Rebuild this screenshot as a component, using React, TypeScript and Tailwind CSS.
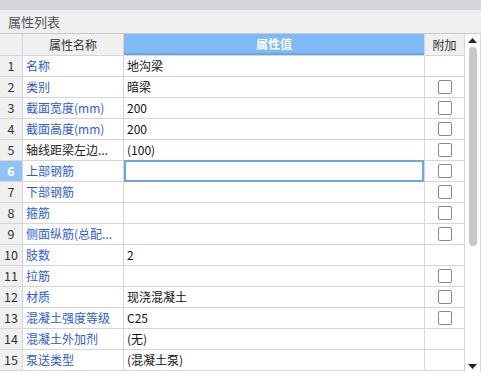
import React from 'react';

type Row = { name: string; value: string; blue: boolean; check: boolean };

const rows: Row[] = [
  { name: '名称', value: '地沟梁', blue: true, check: false },
  { name: '类别', value: '暗梁', blue: true, check: true },
  { name: '截面宽度(mm)', value: '200', blue: true, check: true },
  { name: '截面高度(mm)', value: '200', blue: true, check: true },
  { name: '轴线距梁左边...', value: '(100)', blue: false, check: true },
  { name: '上部钢筋', value: '', blue: true, check: true },
  { name: '下部钢筋', value: '', blue: true, check: true },
  { name: '箍筋', value: '', blue: true, check: true },
  { name: '侧面纵筋(总配...', value: '', blue: true, check: true },
  { name: '肢数', value: '2', blue: true, check: false },
  { name: '拉筋', value: '', blue: true, check: true },
  { name: '材质', value: '现浇混凝土', blue: true, check: true },
  { name: '混凝土强度等级', value: 'C25', blue: true, check: true },
  { name: '混凝土外加剂', value: '(无)', blue: true, check: false },
  { name: '泵送类型', value: '(混凝土泵)', blue: true, check: false },
];

const font = { fontFamily: '"Noto Sans CJK SC", "Noto Sans", sans-serif' };

const Checkbox = () => (
  <div className="w-[14px] h-[14px] rounded-[2px] border border-[#8a8a8a] bg-white" />
);

export default function App() {
  const selected = 5;
  return (
    <div className="w-[481px] h-[372px] bg-white overflow-hidden text-[12px] text-[#222]" style={font}>
      <div className="h-[10px] bg-[#d5d6db]" />
      <div className="h-[24px] bg-[#efefef] border-b border-[#c9c9c9] flex items-center pl-[8px] text-[13px] text-[#555]">
        属性列表
      </div>
      <div className="flex">
        <div className="w-[464px] shrink-0">
          {/* header */}
          <div className="flex h-[22px] border-b border-[#d6d6d6]">
            <div className="w-[23px] shrink-0 bg-[#f0f0f0] border-r border-[#d6d6d6]" />
            <div className="w-[101px] shrink-0 bg-[#f0f0f0] border-r border-[#d6d6d6] flex items-center justify-center text-[#333]">
              属性名称
            </div>
            <div className="w-[300px] shrink-0 bg-[#7fbaf6] border-b-2 border-[#6aa6e4] flex items-center justify-center text-white font-bold">
              属性值
            </div>
            <div className="flex-1 bg-[#f0f0f0] border-l border-[#d6d6d6] flex items-center justify-center text-[#333]">
              附加
            </div>
          </div>
          {rows.map((r, i) => {
            const sel = i === selected;
            return (
              <div key={i} className="flex h-[21px] border-b border-[#d6d6d6]">
                <div
                  className={`w-[23px] shrink-0 border-r border-[#d6d6d6] flex items-center justify-center text-[12.5px] ${
                    sel ? 'bg-[#8fc3f7] text-white font-bold' : 'bg-[#f0f0f0] text-[#333]'
                  }`}
                >
                  {i + 1}
                </div>
                <div
                  className={`w-[101px] shrink-0 border-r border-[#d6d6d6] flex items-center pl-[3px] whitespace-nowrap overflow-hidden ${
                    r.blue ? 'text-[#2f5bde]' : 'text-[#222]'
                  }`}
                >
                  {r.name}
                </div>
                <div
                  className={`w-[300px] shrink-0 flex items-center pl-[3px] text-[#111] ${
                    sel ? 'border-2 border-[#6aa6e4] -mt-px h-[22px]' : ''
                  }`}
                >
                  {r.value}
                </div>
                <div className="flex-1 border-l border-[#d6d6d6] flex items-center justify-center">
                  {r.check && <Checkbox />}
                </div>
              </div>
            );
          })}
        </div>
        {/* scrollbar */}
        <div className="flex-1 border-l border-r border-[#d6d6d6] bg-white flex flex-col items-center pt-[4px] h-[338px]">
          <svg width="9" height="5" viewBox="0 0 9 5">
            <path d="M0 5 L4.5 0 L9 5 Z" fill="#222" />
          </svg>
          <div className="mt-[4px] w-[8px] h-[199px] rounded-full bg-[#c8c8c8]" />
          <div className="flex-1" />
          <svg width="9" height="5" viewBox="0 0 9 5" className="mb-[3px]">
            <path d="M0 0 L9 0 L4.5 5 Z" fill="#222" />
          </svg>
        </div>
      </div>
    </div>
  );
}
